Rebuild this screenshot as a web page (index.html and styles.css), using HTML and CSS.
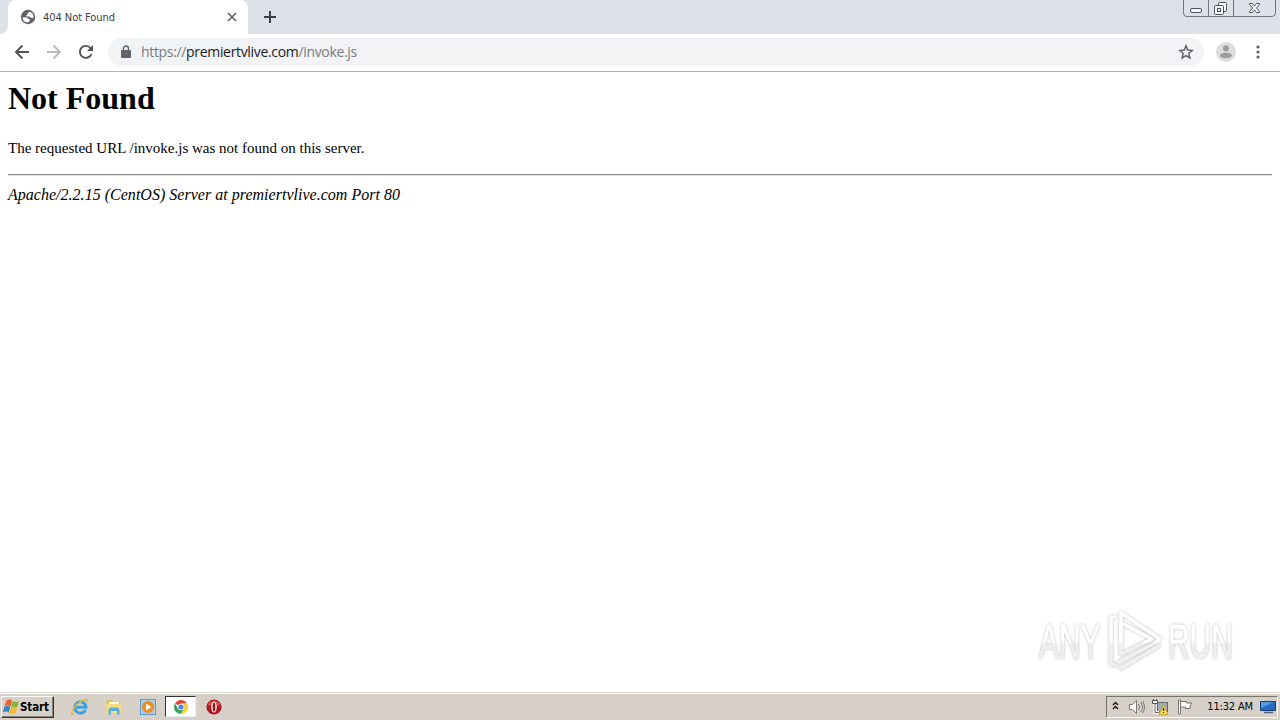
FILE: index.html
```html
<!DOCTYPE html>
<html lang="en">
<head>
    <meta charset="UTF-8">
    <title>404 Not Found</title>
    <link rel="stylesheet" href="styles.css">
</head>
<body>
    <header class="tab-strip">
        <div class="tab-edge"></div>
        <div class="tab">
            <svg class="globe" width="16" height="16" viewBox="0 0 16 16">
                <circle cx="8" cy="8" r="7.200" fill="#5f6368"/>
                <path d="M2.500 8.500 5 8.300l2.500.4 1 1.300 1.500.5-.5 2L7.500 13.500C4.500 13.300 2.500 11 2.500 8.500zM9.500 2.700 7.500 4.200 7.800 5.500l-1.600.7.3 1.200h3l1.200 1.400 2.300.2.700-1C13.700 5.300 12 3.300 9.500 2.700z" fill="#fff"/>
            </svg>
            <span class="tab-title">404 Not Found</span>
            <svg width="10" height="10" viewBox="0 0 10 10" stroke="#5f6368" stroke-width="1.700"><path d="m1 1 8 8m0-8-8 8"/></svg>
        </div>
        <svg class="new-tab" width="12" height="12" viewBox="0 0 12 12" stroke="#3c4043" stroke-width="2"><path d="M6 0v12M0 6h12"/></svg>
        <div class="window-buttons">
            <svg width="95" height="17" viewBox="0 0 95 17" fill="none" stroke="#72767f">
                <path d="M.5 0v13q0 3.500 3.500 3.500h85q3.500 0 3.500-3.500V0M25.500 0v16M50.500 0v16"/>
                <g stroke="#4d535e">
                    <rect x="7.500" y="8.500" width="11" height="4" rx="1.500" fill="#f5f6f8"/>
                    <rect x="35.500" y="2.500" width="8" height="9" rx="1" fill="#f5f6f8"/>
                    <rect x="31.500" y="5.500" width="9" height="9" rx="1" fill="#f5f6f8"/>
                    <rect x="34.500" y="8.500" width="3" height="3"/>
                    <path d="M66.500 3.500h3l2 2.500 2-2.500h3v1l-3 3.500 3 3.500v1h-3l-2-2.500-2 2.500h-3v-1l3-3.500-3-3.500z" fill="#f5f6f8"/>
                </g>
            </svg>
        </div>
    </header>

    <nav class="toolbar">
        <svg class="back" width="16" height="16" viewBox="0 0 16 16" fill="none" stroke="#505357" stroke-width="1.900"><path d="M15 8H2M8.500 1.500 2 8l6.500 6.500"/></svg>
        <svg class="forward" width="16" height="16" viewBox="0 0 16 16" fill="none" stroke="#b8babc" stroke-width="1.800"><path d="M1 8h13M7.500 1.500 14 8l-6.500 6.500"/></svg>
        <svg class="reload" width="16" height="16" viewBox="0 0 16 16" fill="none" stroke="#505357" stroke-width="1.900"><path d="M13.500 10A6 6 0 1 1 12.500 4"/><path d="M15 1v6H9z" fill="#505357" stroke="none"/></svg>
        <div class="omnibox">
            <svg width="10" height="14" viewBox="0 0 10 14"><path d="M2.500 6V3.500a2.500 2.500 0 0 1 5 0V6" fill="none" stroke="#5f6368" stroke-width="1.400"/><rect y="5" width="10" height="8" rx="1" fill="#5f6368"/><circle cx="5" cy="9" r="1" fill="#74787c"/></svg>
            <span class="url">https://<b>premiertvlive.com</b>/invoke.js</span>
            <svg class="star" width="16" height="16" viewBox="0 0 16 16" fill="none" stroke="#5f6368" stroke-width="1.500"><path d="m8 1.800 1.700 4.300 4.600.4-3.500 3 1.100 4.500L8 11.600 4.100 14l1.100-4.500-3.500-3 4.600-.4z"/></svg>
        </div>
        <svg class="avatar" width="20" height="20" viewBox="0 0 20 20"><circle cx="10" cy="10" r="10" fill="#dcdddf"/><circle cx="10" cy="6.500" r="3" fill="#9a9c9f"/><ellipse cx="10" cy="13.500" rx="6" ry="2.800" fill="#9a9c9f"/></svg>
        <svg class="menu" width="4" height="14" viewBox="0 0 4 14" fill="#5f6368"><circle cx="2" cy="2" r="1.600"/><circle cx="2" cy="7" r="1.600"/><circle cx="2" cy="12" r="1.600"/></svg>
    </nav>

    <main class="page">
        <h1>Not Found</h1>
        <p>The requested URL /invoke.js was not found on this server.</p>
        <hr>
        <address>Apache/2.2.15 (CentOS) Server at premiertvlive.com Port 80</address>
    </main>

    <div class="watermark">
        <span>ANY</span>
        <svg width="60" height="64" viewBox="0 0 60 64" fill="none" stroke-linejoin="round">
            <defs>
                <linearGradient id="fade" x1="0" y1="0" x2="0" y2="64" gradientUnits="userSpaceOnUse"><stop offset=".52" stop-color="#fff"/><stop offset=".54" stop-color="#f0f0f0"/></linearGradient>
            </defs>
            <g stroke="url(#fade)" stroke-width="3.500">
                <path d="M10 7 5 9v46l6 2"/>
                <path d="M15 46V4l39 26-4 3"/>
                <path d="M15 14v31l31-15z"/>
                <path d="m11 54 42-22M14 60l40-24"/>
            </g>
        </svg>
        <span>RUN</span>
    </div>

    <footer class="taskbar">
        <div class="start">
            <svg width="17" height="16" viewBox="0 0 17 16"><path d="M3.500 1.500q3-2 5.500 0L7.500 7.300q-3-1.800-6 0z" fill="#ed6027"/><path d="M9.500 2q3 2 6.500 0l-1.500 5.500q-3.500 2-6.500 0z" fill="#83b83c"/><path d="M1.300 8q3-2 6 0l-1.500 5.500q-3-2-6 0z" fill="#3983ca"/><path d="M8 8.300q3 2 6.300 0l-1.500 5.500q-3 2-6.300 0z" fill="#f4bd2c"/></svg>
            <span>Start</span>
        </div>
        <div class="launcher">
            <svg width="18" height="18" viewBox="0 0 18 18" fill="none"><path d="M14.500 11.800A5.600 5.600 0 1 1 15 9.200H5" stroke="#3ba2df" stroke-width="2.900"/><path d="M3 16C-1 18 1 11 6 6.500S17-1 16.500 4" stroke="#e8b636" stroke-width="1.500"/></svg>
        </div>
        <div class="launcher">
            <svg width="18" height="18" viewBox="0 0 18 18"><path d="M1.500 2h5l1 2H15v10H1.500z" fill="#e0be58"/><path d="M4 4h10v4H4z" fill="#fffbdc"/><path d="M1.500 6h15v9h-15z" fill="#f5dc83"/><path d="M3.500 16.500V12q0-2.500 2.500-2.500h6q2.500 0 2.500 2.500v4.500H12V13H6v3.500z" fill="#58afe0"/></svg>
        </div>
        <div class="launcher">
            <svg width="18" height="18" viewBox="0 0 18 18"><rect x="1.500" y="1.500" width="15" height="15" fill="#a9d0ef" stroke="#5c9bcf"/><circle cx="9" cy="9" r="6" fill="#f28c1b"/><path d="m7 5.500 5.500 3.500L7 12.500z" fill="#fff"/></svg>
        </div>
        <div class="launcher active">
            <svg width="14" height="14" viewBox="0 0 14 14"><path d="M7 7 1 3.400A7 7 0 0 1 13.100 3.600H7z" fill="#e34537"/><path d="M13.100 3.600A7 7 0 0 1 6.500 14L10 8.500 8 3.600z" fill="#fbcb3b"/><path d="M1 3.400A7 7 0 0 0 6.500 14L9.800 8.800 7 10 4 8.500z" fill="#37a25b"/><circle cx="7" cy="7" r="3.300" fill="#fff"/><circle cx="7" cy="7" r="2.600" fill="#4a87e8"/></svg>
        </div>
        <div class="launcher">
            <svg width="16" height="16" viewBox="0 0 16 16"><circle cx="8" cy="8" r="7.600" fill="#b01922"/><path d="M2 4.500q6-6 12 0v2H2z" fill="#d04a4a"/><ellipse cx="8" cy="8" rx="2.800" ry="5.500" fill="#f7eaea"/><ellipse cx="8" cy="8" rx="1.300" ry="4.600" fill="#98141c"/></svg>
        </div>
        <div class="tray">
            <svg class="chevrons" width="7" height="9" viewBox="0 0 7 9" fill="none" stroke="#111" stroke-width="1.400"><path d="m1 4 2.500-2.500L6 4M1 8l2.500-2.500L6 8"/></svg>
            <svg width="18" height="16" viewBox="0 0 18 16" fill="#fff" stroke="#7b7974"><path d="M1.500 5.500h3l4-4v13l-4-4h-3z"/><path d="M10.500 5q2 3 0 6M12.500 3q4 5 0 10M14.500 2q4 6 0 12" fill="none"/></svg>
            <svg class="network" width="17" height="16" viewBox="0 0 17 16"><rect x="5.500" y="3.500" width="10" height="9" fill="#a3adb5" stroke="#62686d"/><path d="M.5 1.500h5v3h-5zM1.500 0v2M4.500 0v2" fill="#fff" stroke="#555"/><path d="M3 5v8.500h4" fill="none" stroke="#fff" stroke-width="3"/><path d="M3 5v8.500h4" fill="none" stroke="#666"/><path d="m11.500 6 4.500 9.500H7z" fill="#ffe34b" stroke="#c9a51f"/><path d="M11.500 9v3m0 1v1" stroke="#222" stroke-width="1.300"/></svg>
            <svg class="flag" width="17" height="16" viewBox="0 0 17 16" fill="#fff" stroke="#77746e"><path d="M1.500 1v14h2V1zM3.500 2.500h6v1.500h5.500l-2 3 0 2.500H8.500V8h-5z"/></svg>
            <span class="clock">11:32 AM</span>
            <svg width="16" height="14" viewBox="0 0 16 14"><path d="M.5 1.500h15v9H.5z" fill="#236bc0" stroke="#173e76"/><path d="M1 2h13L1 8z" fill="#5199df"/><path d="M4 12.500h9" stroke="#4b6078" stroke-width="1.500"/></svg>
        </div>
    </footer>
</body>
</html>
```
FILE: styles.css
```css
body {
    margin: 0;
    height: 720px;
    display: flex;
    flex-direction: column;
    overflow: hidden;
    position: relative;
    background: #fff;
    font-family: "Open Sans", sans-serif;
}

svg {
    display: block;
    flex: none;
}

.tab-strip {
    height: 34px;
    display: flex;
    align-items: center;
    background: #dee1e8;
    flex: none;
}

.tab-edge {
    width: 8px;
    height: 34px;
    background: #fff;
}

.tab-edge::before {
    content: "";
    display: block;
    height: 34px;
    background: #dee1e8;
    border-bottom-right-radius: 8px;
}

.tab {
    width: 240px;
    height: 34px;
    box-sizing: border-box;
    padding: 0 11px 0 12px;
    display: flex;
    align-items: center;
    background: #fff;
    border-radius: 8px 8px 0 0;
}

.tab-title {
    flex: 1;
    margin-left: 7px;
    font: 11px "DejaVu Sans Condensed", "DejaVu Sans", sans-serif;
    font-stretch: condensed;
    letter-spacing: -0.05px;
    color: #3c4043;
}

.new-tab {
    margin-left: 16px;
}

.window-buttons {
    margin-left: auto;
    align-self: flex-start;
    padding-right: 2px;
}

.toolbar {
    height: 37px;
    display: flex;
    align-items: center;
    border-bottom: 1px solid #b1b3b6;
    flex: none;
}

.toolbar > svg {
    margin-bottom: 1px;
}

.back {
    margin-left: 14px;
}

.forward,
.reload {
    margin-left: 16px;
}

.omnibox {
    width: 1096px;
    height: 28px;
    margin: 0 0 2px 14px;
    padding: 0 10px 0 13px;
    box-sizing: border-box;
    display: flex;
    align-items: center;
    background: #f1f3f4;
    border-radius: 14px;
}

.url {
    flex: 1;
    margin-left: 10px;
    font-size: 14px;
    line-height: 18px;
    letter-spacing: -0.33px;
    color: #777b80;
}

.url b {
    font-weight: normal;
    color: #202124;
}

.avatar {
    margin-left: 12px;
}

.menu {
    margin-left: 20px;
}

.page {
    flex: 1;
    padding: 8px;
    font-family: "Liberation Serif", serif;
    font-size: 15px;
    color: #000;
}

.page h1 {
    margin: 0;
    font-size: 32px;
    line-height: 37px;
}

.page p {
    margin: 22px 0 16px;
    line-height: 19px;
}

.page hr {
    margin: 0 0 9px;
    border: 0;
    border-top: 1px solid #8c8c8c;
    border-bottom: 1px solid #dedede;
}

.page address {
    font-size: 16px;
    line-height: 19px;
    letter-spacing: 0.02px;
}

.watermark {
    position: absolute;
    left: 1039px;
    top: 609px;
    width: 196px;
    height: 64px;
    display: flex;
    align-items: center;
    font: 49px/66px "Liberation Sans", sans-serif;
}

/* the narrow lettering overlaps its own unscaled box */
.watermark span {
    width: 108px;
    margin-right: -39px;
    color: transparent;
    background: linear-gradient(#fff 53%, #efefef 54%);
    -webkit-background-clip: text;
    background-clip: text;
    -webkit-text-stroke: 1px transparent;
    filter: drop-shadow(0 0 1.5px #bbb);
    transform: scaleX(0.61);
    transform-origin: left;
}

.watermark svg {
    margin-right: 2px;
    filter: drop-shadow(0 0 1.5px #bbb);
}

.taskbar {
    height: 28px;
    box-sizing: border-box;
    padding: 2px 2px 2px 1px;
    border-top: 1px solid #dedbd4;
    box-shadow: inset 0 1px #fff;
    display: flex;
    align-items: center;
    background: #d6d0c9;
    flex: none;
}

.start {
    width: 53px;
    height: 22px;
    box-sizing: border-box;
    margin-right: 12px;
    border: 1px solid;
    border-color: #fff #333 #333 #fff;
    box-shadow: inset -1px -1px #858078;
    display: flex;
    align-items: center;
    padding-left: 1px;
    font: bold 11.5px "DejaVu Sans Condensed", "DejaVu Sans", sans-serif;
    font-stretch: condensed;
    letter-spacing: -0.1px;
}

.launcher {
    width: 27px;
    height: 20px;
    display: flex;
    align-items: center;
    justify-content: center;
    margin-right: 7px;
}

.launcher.active {
    width: 31px;
    height: 21px;
    margin: 0 4px 0 -3px;
    box-sizing: border-box;
    background: #fff;
    border: 1px solid;
    border-color: #333 #eee #eee #333;
}

.tray {
    width: 172px;
    height: 22px;
    box-sizing: border-box;
    padding: 0 1px 0 5px;
    margin-left: auto;
    display: flex;
    align-items: center;
    border: 1px solid;
    border-color: #77736d #fff #fff #77736d;
}

.chevrons {
    margin: 0 9px 2px 0;
}

.network {
    margin-left: 6px;
}

.flag {
    margin-left: 8px;
}

.clock {
    margin: 0 7px 0 auto;
    font: 11px "DejaVu Sans Condensed", "DejaVu Sans", sans-serif;
    font-stretch: condensed;
    letter-spacing: -0.15px;
    white-space: nowrap;
}
```
